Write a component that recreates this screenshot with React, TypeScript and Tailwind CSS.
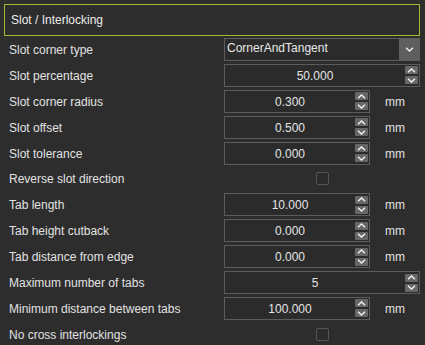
import React from "react";

type Row =
  | { label: string; kind: "combo"; value: string }
  | { label: string; kind: "spin"; value: string; unit?: string }
  | { label: string; kind: "check" };

const rows: Row[] = [
  { label: "Slot corner type", kind: "combo", value: "CornerAndTangent" },
  { label: "Slot percentage", kind: "spin", value: "50.000" },
  { label: "Slot corner radius", kind: "spin", value: "0.300", unit: "mm" },
  { label: "Slot offset", kind: "spin", value: "0.500", unit: "mm" },
  { label: "Slot tolerance", kind: "spin", value: "0.000", unit: "mm" },
  { label: "Reverse slot direction", kind: "check" },
  { label: "Tab length", kind: "spin", value: "10.000", unit: "mm" },
  { label: "Tab height cutback", kind: "spin", value: "0.000", unit: "mm" },
  { label: "Tab distance from edge", kind: "spin", value: "0.000", unit: "mm" },
  { label: "Maximum number of tabs", kind: "spin", value: "5" },
  { label: "Minimum distance between tabs", kind: "spin", value: "100.000", unit: "mm" },
  { label: "No cross interlockings", kind: "check" },
];

function Chevron({ up }: { up?: boolean }) {
  return (
    <svg width="9" height="5" viewBox="0 0 9 5" className="block">
      <path
        d={up ? "M1 4.2 L4.5 1 L8 4.2" : "M1 0.8 L4.5 4 L8 0.8"}
        fill="none"
        stroke="#f2f2f2"
        strokeWidth="1.4"
      />
    </svg>
  );
}

function SpinBox({ value, wide }: { value: string; wide: boolean }) {
  return (
    <div
      className={`flex h-[23px] items-center border border-[#5c5c5c] bg-[#2b2b2b] pr-[1px] ${
        wide ? "w-[196px]" : "w-[146px]"
      }`}
    >
      <div className="flex-1 text-center text-[#e4e4e4] leading-none pt-[1px]">{value}</div>
      <div className="flex w-[13px] flex-col gap-[2px]">
        <div className="flex h-[8px] items-center justify-center rounded-[1px] bg-[#676767]">
          <Chevron up />
        </div>
        <div className="flex h-[8px] items-center justify-center rounded-[1px] bg-[#676767]">
          <Chevron />
        </div>
      </div>
    </div>
  );
}

function Combo({ value }: { value: string }) {
  return (
    <div className="flex h-[23px] w-[196px] items-stretch border border-[#5c5c5c] bg-[#2b2b2b]">
      <div className="flex-1 pl-[2px] pt-[2px] leading-[14px] text-[#e8e8e8]">{value}</div>
      <div className="-my-[1px] -mr-[1px] flex w-[21px] items-center justify-center bg-[#5f5f5f]">
        <Chevron />
      </div>
    </div>
  );
}

export default function App() {
  return (
    <div
      className="h-[345px] w-[425px] overflow-hidden bg-[#2d2d2d] text-[12px] text-[#e2e2e2]"
      style={{ fontFamily: '"Liberation Sans", Arial, sans-serif' }}
    >
      <div className="ml-[4px] mt-[4px] flex h-[32px] w-[416px] items-center border border-[#9fbd2b] pl-[6px] text-[#ececec]">
        Slot / Interlocking
      </div>
      <div className="mt-[2px] flex flex-col gap-[2.9px]">
        {rows.map((r) => (
          <div key={r.label} className="flex h-[23px] items-center">
            <div className="w-[224px] pl-[9px] pt-[1px]">{r.label}</div>
            {r.kind === "combo" && <Combo value={r.value} />}
            {r.kind === "spin" && (
              <>
                <SpinBox value={r.value} wide={!r.unit} />
                {r.unit && <div className="ml-[15px] pt-[1px]">{r.unit}</div>}
              </>
            )}
            {r.kind === "check" && (
              <div className="flex w-[196px] justify-center">
                <div className="h-[13px] w-[13px] rounded-[2px] border border-[#555555] bg-[#2b2b2b]" />
              </div>
            )}
          </div>
        ))}
      </div>
    </div>
  );
}
